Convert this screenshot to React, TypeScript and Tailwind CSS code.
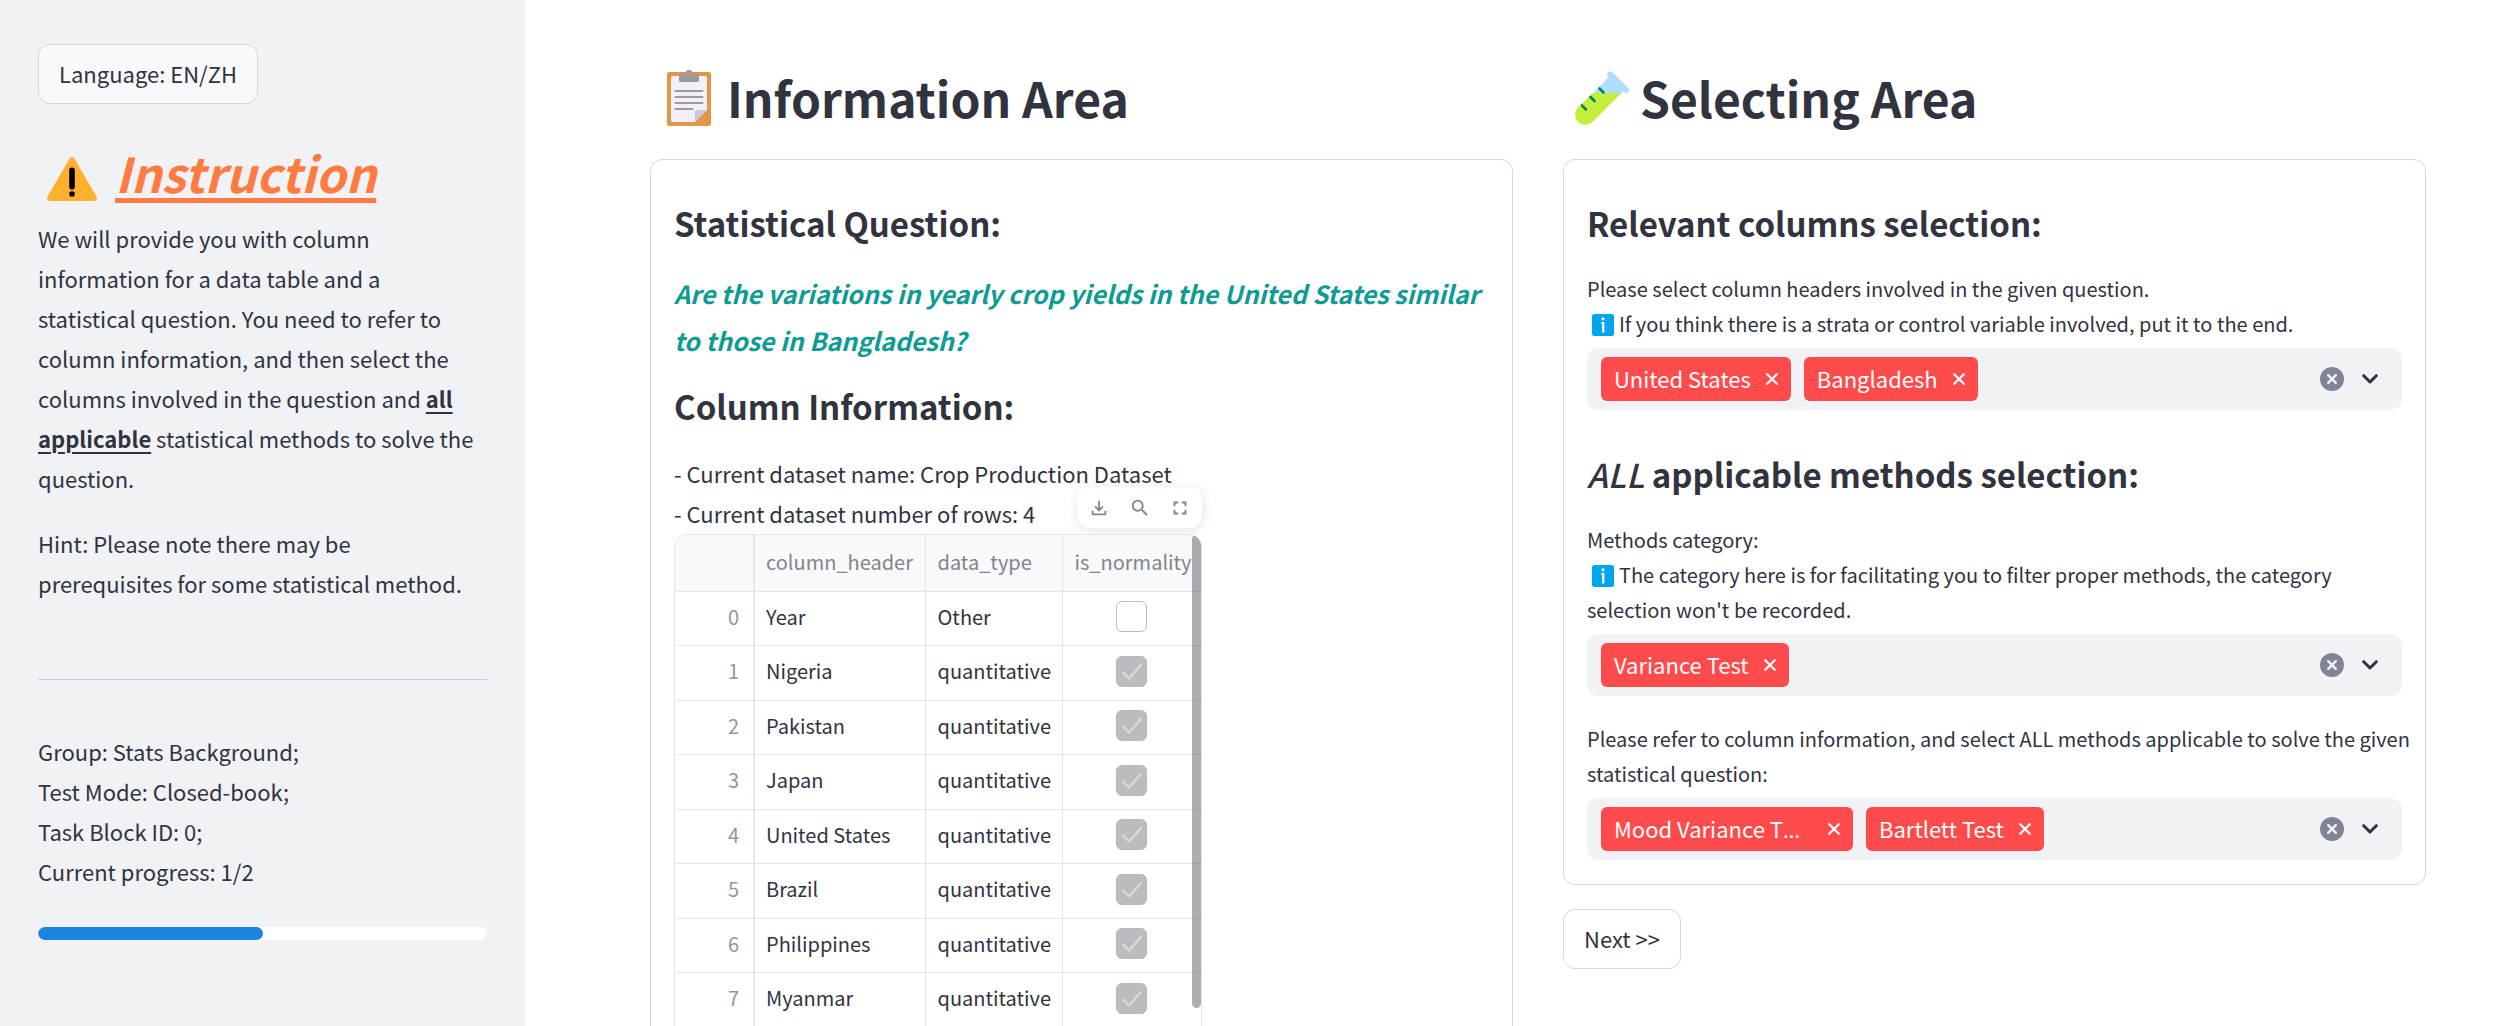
import type { ReactNode } from "react";
import { MdFullscreen, MdOutlineFileDownload, MdSearch } from "react-icons/md";

const rows = [
  { name: "Year", type: "Other", normal: false },
  { name: "Nigeria", type: "quantitative", normal: true },
  { name: "Pakistan", type: "quantitative", normal: true },
  { name: "Japan", type: "quantitative", normal: true },
  { name: "United States", type: "quantitative", normal: true },
  { name: "Brazil", type: "quantitative", normal: true },
  { name: "Philippines", type: "quantitative", normal: true },
  { name: "Myanmar", type: "quantitative", normal: true },
];

function WarningIcon() {
  return (
    <svg viewBox="0 0 50 44" className="h-11 w-[50px]" aria-hidden="true">
      <path d="M22.6 1.4a2.8 2.8 0 0 1 4.8 0l22.2 38.4a2.8 2.8 0 0 1-2.4 4.2H2.8a2.8 2.8 0 0 1-2.4-4.2z" fill="#ffb02e" />
      <rect x="22.2" y="10.5" width="5.6" height="22" rx="2.8" fill="#000" />
      <circle cx="25" cy="37" r="2.8" fill="#000" />
    </svg>
  );
}

function ClipboardIcon() {
  return (
    <svg viewBox="0 0 44 56" className="h-14 w-11" aria-hidden="true">
      <rect x="0" y="2" width="44" height="54" rx="2.5" fill="#e19747" />
      <path d="M5.5 6h33a1.5 1.5 0 0 1 1.5 1.5V40L28 52H5.500a1.500 1.500 0 0 1-1.500-1.500v-43A1.500 1.500 0 0 1 5.500 6z" fill="#f3eef8" />
      <path d="M40 40 28 52V42a2 2 0 0 1 2-2z" fill="#cdc4d6" />
      <path d="M8.500 21h27M8.500 27h27M8.500 33h27M8.500 39h17" stroke="#9b9b9b" strokeWidth="2" strokeLinecap="round" />
      <path fillRule="evenodd" d="M22 0a4 4 0 0 0-3.900 4H14a2 2 0 0 0-2 2v4.500a1.500 1.500 0 0 0 1.500 1.500h17a1.500 1.500 0 0 0 1.500-1.500V6a2 2 0 0 0-2-2h-4.100A4 4 0 0 0 22 0zm0 2.200a1.800 1.800 0 1 1 0 3.600 1.800 1.800 0 0 1 0-3.600z" fill="#9b9b9b" />
    </svg>
  );
}

function TestTubeIcon() {
  return (
    <svg viewBox="0 0 54 54" className="size-[54px]" aria-hidden="true">
      <path d="M34.500 5 49 19.500 43 25.500 28 23 19 21.500z" fill="#aeddff" />
      <path d="M33 1.600a3 3 0 0 1 4.300-.4l16 15.600a3 3 0 0 1-4.300 4.300L33.400 5.800a3 3 0 0 1-.4-4.200z" fill="#aeddff" />
      <path d="M18.500 21.500 46 22.500 17.500 51A10.200 10.200 0 0 1 3 36.500z" fill="#c3ef3c" />
      <path d="m24.500 17.500 4 4M15.500 26l4 4M7 34.500l4 4" stroke="#008463" strokeWidth="2.600" strokeLinecap="round" />
    </svg>
  );
}

function InfoIcon() {
  return (
    <svg viewBox="0 0 22 22" className="mr-[5px] ml-[5px] inline-block size-[22px] align-[-4px]" aria-hidden="true">
      <rect width="22" height="22" rx="2.500" fill="#00a6ed" />
      <circle cx="11" cy="4.800" r="1.600" fill="#fff" />
      <path d="M9.200 8h3.200v10.500h-2.400V9.800h-.8z" fill="#fff" />
    </svg>
  );
}

function Chip({ children, label }: { children: ReactNode; label: string }) {
  return (
    <span className="flex h-11 items-center gap-[15px] rounded-[6px] bg-[#ff4b4b] px-[13px] text-white">
      <span className="pb-0.5">{children}</span>
      <button type="button" aria-label={`Remove ${label}`}>
        <svg viewBox="0 0 12 12" className="size-3" fill="none" stroke="currentColor" strokeWidth="2.200" strokeLinecap="round" aria-hidden="true">
          <path d="m1.200 1.200 9.600 9.600M10.800 1.200l-9.600 9.600" />
        </svg>
      </button>
    </span>
  );
}

function MultiSelect({ id, label, children }: { id: string; label: ReactNode; children: ReactNode }) {
  return (
    <div className="flex flex-col gap-[7px]">
      <label htmlFor={id} className="-mr-4 text-[20px] leading-[35px]">
        {label}
      </label>
      <div className="flex h-[62px] items-center rounded-xl bg-[#f0f2f6] pr-6 pl-3.5">
        <div className="flex gap-[13px]">{children}</div>
        <input id={id} type="text" className="min-w-0 flex-1 bg-transparent outline-none" />
        <button type="button" aria-label="Clear all" className="mr-[18px]">
          <svg viewBox="0 0 24 24" className="size-6" aria-hidden="true">
            <circle cx="12" cy="12" r="12" fill="#808495" />
            <path d="m8.200 8.200 7.600 7.600M15.800 8.200l-7.600 7.600" stroke="#f0f2f6" strokeWidth="2.400" strokeLinecap="round" />
          </svg>
        </button>
        <button type="button" aria-label="Open options">
          <svg viewBox="0 0 16 10" className="h-2.5 w-4" fill="none" stroke="#31333f" strokeWidth="3" strokeLinecap="round" strokeLinejoin="round" aria-hidden="true">
            <path d="m1.700 1.700 6.300 6.300 6.300-6.300" />
          </svg>
        </button>
      </div>
    </div>
  );
}

function Sidebar() {
  return (
    <aside className="w-[525px] shrink-0 bg-[#f0f2f6] px-[38px] pt-11">
      <button type="button" className="flex h-[60px] items-center rounded-xl border border-[#d3d5da] bg-[#f9f9fc] px-5 pb-0.5">
        Language: EN/ZH
      </button>
      <h2 className="mt-[35px] flex items-center gap-[18px] pl-[9px] text-[48px] leading-[67px] font-semibold text-[#ff7b40] italic">
        <span className="mt-[13px]"><WarningIcon /></span>
        <span className="underline decoration-[5px] underline-offset-[5px]">Instruction</span>
      </h2>
      <p className="mt-3 pr-2">
        We will provide you with column information for a data table and a statistical question. You need to refer to
        column information, and then select the columns involved in the question and{" "}
        <b className="font-semibold underline decoration-2 underline-offset-4">all applicable</b> statistical methods to
        solve the question.
      </p>
      <p className="mt-[25px]">Hint: Please note there may be prerequisites for some statistical method.</p>
      <hr className="mt-[76px] border-[#c9cbd1]" />
      <p className="mt-[51px]">
        Group: Stats Background;
        <br />
        Test Mode: Closed-book;
        <br />
        Task Block ID: 0;
        <br />
        Current progress: 1/2
      </p>
      <div role="progressbar" aria-label="Current progress" aria-valuenow={50} className="mt-9 h-[13px] overflow-hidden rounded-full bg-white">
        <div className="h-full w-1/2 rounded-full bg-[#1c83e1]" />
      </div>
    </aside>
  );
}

function ColumnTable() {
  return (
    <div className="relative mt-px w-[528px]">
      <div className="absolute -top-[47px] right-0 flex h-[41px] w-[125px] items-center justify-between rounded-xl bg-white px-[11px] text-[22px] text-[#83848c] shadow-[1px_2px_12px_rgba(0,0,0,0.12)]">
        <button type="button" aria-label="Download"><MdOutlineFileDownload /></button>
        <button type="button" aria-label="Search"><MdSearch /></button>
        <button type="button" aria-label="Fullscreen"><MdFullscreen /></button>
      </div>
      <div className="relative overflow-hidden rounded-t-xl border border-[#e4e5e8]">
        <table className="w-full table-fixed border-collapse text-[20px] leading-7">
          <colgroup>
            <col className="w-[79px]" />
            <col className="w-[171px]" />
            <col className="w-[137px]" />
            <col />
          </colgroup>
          <thead>
            <tr className="h-14 bg-[#f8f9fb] text-left text-[#83848c]">
              <td className="border-r-2 border-b border-[#e6e7e9]" />
              <th scope="col" className="border-r border-b border-[#e4e5e8] px-[11px] pb-0.5 font-normal">column_header</th>
              <th scope="col" className="border-r border-b border-[#e4e5e8] px-3 pb-0.5 font-normal">data_type</th>
              <th scope="col" className="border-b border-[#e4e5e8] pb-0.5 pl-3 font-normal">is_normality</th>
            </tr>
          </thead>
          <tbody>
            {rows.map((row, i) => (
              <tr key={row.name} className="odd:h-[54px] even:h-[55px]">
                <th scope="row" className="border-r-2 border-b border-[#e6e7e9] px-3.5 pb-[3px] text-right font-normal text-[#94959c]">{i}</th>
                <td className="border-r border-b border-[#e4e5e8] px-[11px] pb-[3px]">{row.name}</td>
                <td className="border-r border-b border-[#e4e5e8] px-3 pb-[3px]">{row.type}</td>
                <td className="border-b border-[#e4e5e8] pb-[3px]">
                  <label className="relative mx-auto block size-[31px]" aria-label={`${row.name} is_normality`}>
                    <input
                      type="checkbox"
                      checked={row.normal}
                      readOnly
                      className="block size-[31px] appearance-none rounded-[6px] border border-[#b9b9bf] checked:bg-[#bbbbc0]"
                    />
                    {row.normal && (
                      <svg viewBox="0 0 31 31" className="absolute inset-0 size-[31px]" fill="none" stroke="#d9d9dc" strokeWidth="2.400" strokeLinecap="round" strokeLinejoin="round" aria-hidden="true">
                        <path d="m7 16.500 6 6 12-13.500" />
                      </svg>
                    )}
                  </label>
                </td>
              </tr>
            ))}
          </tbody>
        </table>
        <div className="absolute top-0 right-0 h-[473px] w-[9px] rounded-full bg-[#31333f]/40" />
      </div>
    </div>
  );
}

export default function App() {
  return (
    <div className="flex h-screen overflow-hidden bg-white font-['Noto_Sans_CJK_SC','Open_Sans',sans-serif] text-[22px] leading-10 text-[#31333f]">
      <Sidebar />
      <main className="grid min-w-0 flex-1 grid-cols-2 items-start gap-[50px] overflow-hidden pt-16 pr-[86px] pl-[125px]">
        <section>
          <h2 className="flex items-center gap-[11px] pl-3 text-[48px] leading-[67px] font-semibold">
            <span className="flex w-[54px] justify-center"><ClipboardIcon /></span>
            Information Area
          </h2>
          <div className="mt-7 rounded-xl border border-[#d6d6d9] px-[23px] py-6">
            <h4 className="pt-[17px] text-[33px] leading-[45px] font-semibold">Statistical Question:</h4>
            <p className="mt-6 -mr-2 text-[25px] leading-[47px] font-semibold text-[#0d9b94] italic">
              Are the variations in yearly crop yields in the United States similar to those in Bangladesh?
            </p>
            <h4 className="mt-5 text-[33px] leading-[45px] font-semibold">Column Information:</h4>
            <p className="mt-6">
              - Current dataset name: Crop Production Dataset
              <br />- Current dataset number of rows: 4
            </p>
            <ColumnTable />
          </div>
        </section>
        <section>
          <h2 className="flex items-center gap-[11px] pl-3 text-[48px] leading-[67px] font-semibold">
            <span className="flex w-[54px] justify-center"><TestTubeIcon /></span>
            Selecting Area
          </h2>
          <div className="mt-7 flex flex-col gap-[25px] rounded-xl border border-[#d6d6d9] px-[23px] py-6">
            <h4 className="pt-[17px] text-[33px] leading-[45px] font-semibold">Relevant columns selection:</h4>
            <MultiSelect
              id="columns"
              label={
                <>
                  Please select column headers involved in the given question.
                  <br />
                  <InfoIcon />
                  If you think there is a strata or control variable involved, put it to the end.
                </>
              }
            >
              <Chip label="United States">United States</Chip>
              <Chip label="Bangladesh">Bangladesh</Chip>
            </MultiSelect>
            <h4 className="pt-[17px] text-[33px] leading-[45px] font-semibold">
              <em className="font-medium">ALL</em> applicable methods selection:
            </h4>
            <MultiSelect
              id="category"
              label={
                <>
                  Methods category:
                  <br />
                  <InfoIcon />
                  The category here is for facilitating you to filter proper methods, the category
                  <br />
                  selection won't be recorded.
                </>
              }
            >
              <Chip label="Variance Test">Variance Test</Chip>
            </MultiSelect>
            <MultiSelect
              id="methods"
              label="Please refer to column information, and select ALL methods applicable to solve the given statistical question:"
            >
              <Chip label="Mood Variance Test">
                <span className="block w-[199px]">
                  Mood Variance T<span className="font-['Open_Sans']">…</span>
                </span>
              </Chip>
              <Chip label="Bartlett Test">Bartlett Test</Chip>
            </MultiSelect>
          </div>
          <button type="button" className="mt-6 flex h-[60px] items-center rounded-xl border border-[#d6d6d9] px-5 pb-0.5">
            Next &gt;&gt;
          </button>
        </section>
      </main>
    </div>
  );
}
